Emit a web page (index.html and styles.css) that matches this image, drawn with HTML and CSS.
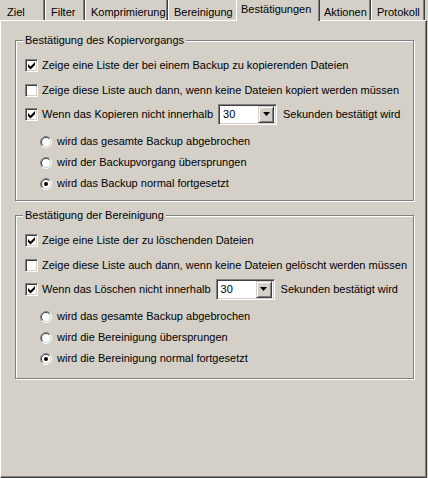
FILE: index.html
```html
<!DOCTYPE html>
<html lang="de">
<head>
<meta charset="utf-8">
<title>Bestätigungen</title>
<link rel="stylesheet" href="styles.css">
</head>
<body>
<div class="dialog">
  <div class="tabs">
    <div class="tab tab-first w-ziel">Ziel</div>
    <div class="tab w-filter">Filter</div>
    <div class="tab w-komp">Komprimierung</div>
    <div class="tab w-ber">Bereinigung</div>
    <div class="tab tab-active w-best">Bestätigungen</div>
    <div class="tab w-akt">Aktionen</div>
    <div class="tab w-prot">Protokoll</div>
  </div>
  <div class="panel">
    <div class="group">
      <div class="group-title">Bestätigung des Kopiervorgangs</div>
      <div class="row check-row">
        <span class="checkbox"><svg class="mark" width="11" height="11" viewBox="0 0 11 11"><polygon points="2,4 4.5,6.5 9,2 9,5 4.5,9.5 2,7" fill="#000"/></svg></span>
        <span class="label">Zeige eine Liste der bei einem Backup zu kopierenden Dateien</span>
      </div>
      <div class="row check-row">
        <span class="checkbox"></span>
        <span class="label">Zeige diese Liste auch dann, wenn keine Dateien kopiert werden müssen</span>
      </div>
      <div class="row combo-row">
        <span class="checkbox"><svg class="mark" width="11" height="11" viewBox="0 0 11 11"><polygon points="2,4 4.5,6.5 9,2 9,5 4.5,9.5 2,7" fill="#000"/></svg></span>
        <span class="label">Wenn das Kopieren nicht innerhalb</span>
        <span class="combo"><span class="combo-value">30</span><span class="combo-btn"><svg width="7" height="4" viewBox="0 0 7 4"><polygon points="0,0 7,0 3.5,4" fill="#000"/></svg></span></span>
        <span class="label after-combo">Sekunden bestätigt wird</span>
      </div>
      <div class="row radio-row">
        <svg class="radio" width="12" height="12" viewBox="0 0 12 12"><circle cx="6" cy="6" r="5" fill="#fff"/><path d="M2.1 9.9 A5.5 5.5 0 0 1 9.9 2.1" fill="none" stroke="#808080"/><path d="M9.9 2.1 A5.5 5.5 0 0 1 2.1 9.9" fill="none" stroke="#fff"/><path d="M2.8 9.2 A4.5 4.5 0 0 1 9.2 2.8" fill="none" stroke="#404040"/><path d="M9.2 2.8 A4.5 4.5 0 0 1 2.8 9.2" fill="none" stroke="#d4d0c8"/></svg>
        <span class="label">wird das gesamte Backup abgebrochen</span>
      </div>
      <div class="row radio-row">
        <svg class="radio" width="12" height="12" viewBox="0 0 12 12"><circle cx="6" cy="6" r="5" fill="#fff"/><path d="M2.1 9.9 A5.5 5.5 0 0 1 9.9 2.1" fill="none" stroke="#808080"/><path d="M9.9 2.1 A5.5 5.5 0 0 1 2.1 9.9" fill="none" stroke="#fff"/><path d="M2.8 9.2 A4.5 4.5 0 0 1 9.2 2.8" fill="none" stroke="#404040"/><path d="M9.2 2.8 A4.5 4.5 0 0 1 2.8 9.2" fill="none" stroke="#d4d0c8"/></svg>
        <span class="label">wird der Backupvorgang übersprungen</span>
      </div>
      <div class="row radio-row">
        <svg class="radio" width="12" height="12" viewBox="0 0 12 12"><circle cx="6" cy="6" r="5" fill="#fff"/><path d="M2.1 9.9 A5.5 5.5 0 0 1 9.9 2.1" fill="none" stroke="#808080"/><path d="M9.9 2.1 A5.5 5.5 0 0 1 2.1 9.9" fill="none" stroke="#fff"/><path d="M2.8 9.2 A4.5 4.5 0 0 1 9.2 2.8" fill="none" stroke="#404040"/><path d="M9.2 2.8 A4.5 4.5 0 0 1 2.8 9.2" fill="none" stroke="#d4d0c8"/><circle cx="6" cy="6" r="2" fill="#000"/></svg>
        <span class="label">wird das Backup normal fortgesetzt</span>
      </div>
    </div>

    <div class="group group-second">
      <div class="group-title">Bestätigung der Bereinigung</div>
      <div class="row check-row">
        <span class="checkbox"><svg class="mark" width="11" height="11" viewBox="0 0 11 11"><polygon points="2,4 4.5,6.5 9,2 9,5 4.5,9.5 2,7" fill="#000"/></svg></span>
        <span class="label">Zeige eine Liste der zu löschenden Dateien</span>
      </div>
      <div class="row check-row">
        <span class="checkbox"></span>
        <span class="label">Zeige diese Liste auch dann, wenn keine Dateien gelöscht werden müssen</span>
      </div>
      <div class="row combo-row">
        <span class="checkbox"><svg class="mark" width="11" height="11" viewBox="0 0 11 11"><polygon points="2,4 4.5,6.5 9,2 9,5 4.5,9.5 2,7" fill="#000"/></svg></span>
        <span class="label">Wenn das Löschen nicht innerhalb</span>
        <span class="combo"><span class="combo-value">30</span><span class="combo-btn"><svg width="7" height="4" viewBox="0 0 7 4"><polygon points="0,0 7,0 3.5,4" fill="#000"/></svg></span></span>
        <span class="label after-combo">Sekunden bestätigt wird</span>
      </div>
      <div class="row radio-row">
        <svg class="radio" width="12" height="12" viewBox="0 0 12 12"><circle cx="6" cy="6" r="5" fill="#fff"/><path d="M2.1 9.9 A5.5 5.5 0 0 1 9.9 2.1" fill="none" stroke="#808080"/><path d="M9.9 2.1 A5.5 5.5 0 0 1 2.1 9.9" fill="none" stroke="#fff"/><path d="M2.8 9.2 A4.5 4.5 0 0 1 9.2 2.8" fill="none" stroke="#404040"/><path d="M9.2 2.8 A4.5 4.5 0 0 1 2.8 9.2" fill="none" stroke="#d4d0c8"/></svg>
        <span class="label">wird das gesamte Backup abgebrochen</span>
      </div>
      <div class="row radio-row">
        <svg class="radio" width="12" height="12" viewBox="0 0 12 12"><circle cx="6" cy="6" r="5" fill="#fff"/><path d="M2.1 9.9 A5.5 5.5 0 0 1 9.9 2.1" fill="none" stroke="#808080"/><path d="M9.9 2.1 A5.5 5.5 0 0 1 2.1 9.9" fill="none" stroke="#fff"/><path d="M2.8 9.2 A4.5 4.5 0 0 1 9.2 2.8" fill="none" stroke="#404040"/><path d="M9.2 2.8 A4.5 4.5 0 0 1 2.8 9.2" fill="none" stroke="#d4d0c8"/></svg>
        <span class="label">wird die Bereinigung übersprungen</span>
      </div>
      <div class="row radio-row">
        <svg class="radio" width="12" height="12" viewBox="0 0 12 12"><circle cx="6" cy="6" r="5" fill="#fff"/><path d="M2.1 9.9 A5.5 5.5 0 0 1 9.9 2.1" fill="none" stroke="#808080"/><path d="M9.9 2.1 A5.5 5.5 0 0 1 2.1 9.9" fill="none" stroke="#fff"/><path d="M2.8 9.2 A4.5 4.5 0 0 1 9.2 2.8" fill="none" stroke="#404040"/><path d="M9.2 2.8 A4.5 4.5 0 0 1 2.8 9.2" fill="none" stroke="#d4d0c8"/><circle cx="6" cy="6" r="2" fill="#000"/></svg>
        <span class="label">wird die Bereinigung normal fortgesetzt</span>
      </div>
    </div>
  </div>
</div>
</body>
</html>
```

FILE: styles.css
```css
* { box-sizing: border-box; }

html, body {
  margin: 0;
  padding: 0;
}

body {
  background: #d4d0c8;
  color: #000;
  font-family: "Liberation Sans", "DejaVu Sans", sans-serif;
  font-size: 11px;
  width: 428px;
  height: 478px;
  overflow: hidden;
}

.dialog {
  width: 428px;
  height: 478px;
  display: flex;
  flex-direction: column;
}

/* ---------- tabs ---------- */
.tabs {
  display: flex;
  height: 20px;
  position: relative;
  z-index: 1;
}

.tab {
  height: 20px;
  padding: 6px 0 0 5px;
  line-height: 12px;
  white-space: nowrap;
  border-left: 1px solid #fff;
  border-right: 1px solid #404040;
  box-shadow: inset -1px 0 0 #808080;
  background: #d4d0c8;
}

.tab-first {
  border-left: 0;
  padding-left: 7px;
}

.tab-active {
  position: relative;
  z-index: 2;
  height: 21px;
  margin: 0 -2px -1px -2px;
  padding: 3px 0 0 4px;
}

.w-ziel { width: 45px; }
.w-filter { width: 40px; }
.w-komp { width: 83px; }
.w-ber { width: 70px; }
.w-best { width: 84px; }
.w-akt { width: 53px; }
.w-prot { width: 54px; }

/* ---------- panel ---------- */
.panel {
  width: 427px;
  height: 458px;
  border-style: solid;
  border-width: 1px;
  border-color: #fff #404040 #404040 #fff;
  box-shadow: inset -1px -1px 0 #808080;
  padding: 19px 0 0 14px;
}

/* ---------- group box ---------- */
.group {
  position: relative;
  width: 399px;
  border: 1px solid #808080;
  box-shadow: inset 1px 1px 0 #fff, 1px 1px 0 #fff;
  padding: 14px 0 6px 0;
}

.group-second {
  margin-top: 14px;
  padding-bottom: 9px;
}

.group-title {
  position: absolute;
  top: -7px;
  left: 7px;
  padding: 0 2px;
  line-height: 13px;
  background: #d4d0c8;
  white-space: nowrap;
}

/* ---------- rows ---------- */
.row {
  display: flex;
  align-items: center;
  white-space: nowrap;
}

.check-row {
  height: 20px;
  margin-bottom: 5px;
}

.combo-row {
  height: 20px;
  margin-top: -1px;
  margin-bottom: 7px;
}

.radio-row {
  height: 21px;
}

.label {
  line-height: 13px;
}

/* ---------- checkbox ---------- */
.checkbox {
  display: block;
  flex: none;
  width: 13px;
  height: 13px;
  margin: 0 4px 0 9px;
  background: #fff;
  border-style: solid;
  border-width: 1px;
  border-color: #808080 #fff #fff #808080;
  box-shadow: inset 1px 1px 0 #404040, inset -1px -1px 0 #d4d0c8;
}

.mark {
  display: block;
}

/* ---------- radio ---------- */
.radio {
  display: block;
  flex: none;
  margin: 0 5px 0 24px;
}

/* ---------- combo ---------- */
.combo {
  display: flex;
  align-items: center;
  flex: none;
  width: 59px;
  height: 21px;
  margin-left: 5px;
  padding: 2px 2px 2px 4px;
  background: #fff;
  border-style: solid;
  border-width: 1px;
  border-color: #808080 #fff #fff #808080;
  box-shadow: inset 1px 1px 0 #404040, inset -1px -1px 0 #d4d0c8;
}

.combo-value {
  flex: 1;
  line-height: 13px;
}

.combo-btn {
  display: flex;
  align-items: center;
  justify-content: center;
  width: 16px;
  height: 17px;
  background: #d4d0c8;
  border-style: solid;
  border-width: 1px;
  border-color: #d4d0c8 #404040 #404040 #d4d0c8;
  box-shadow: inset 1px 1px 0 #fff, inset -1px -1px 0 #808080;
}

.combo-btn svg {
  display: block;
}

.after-combo {
  margin-left: 6px;
}
```
